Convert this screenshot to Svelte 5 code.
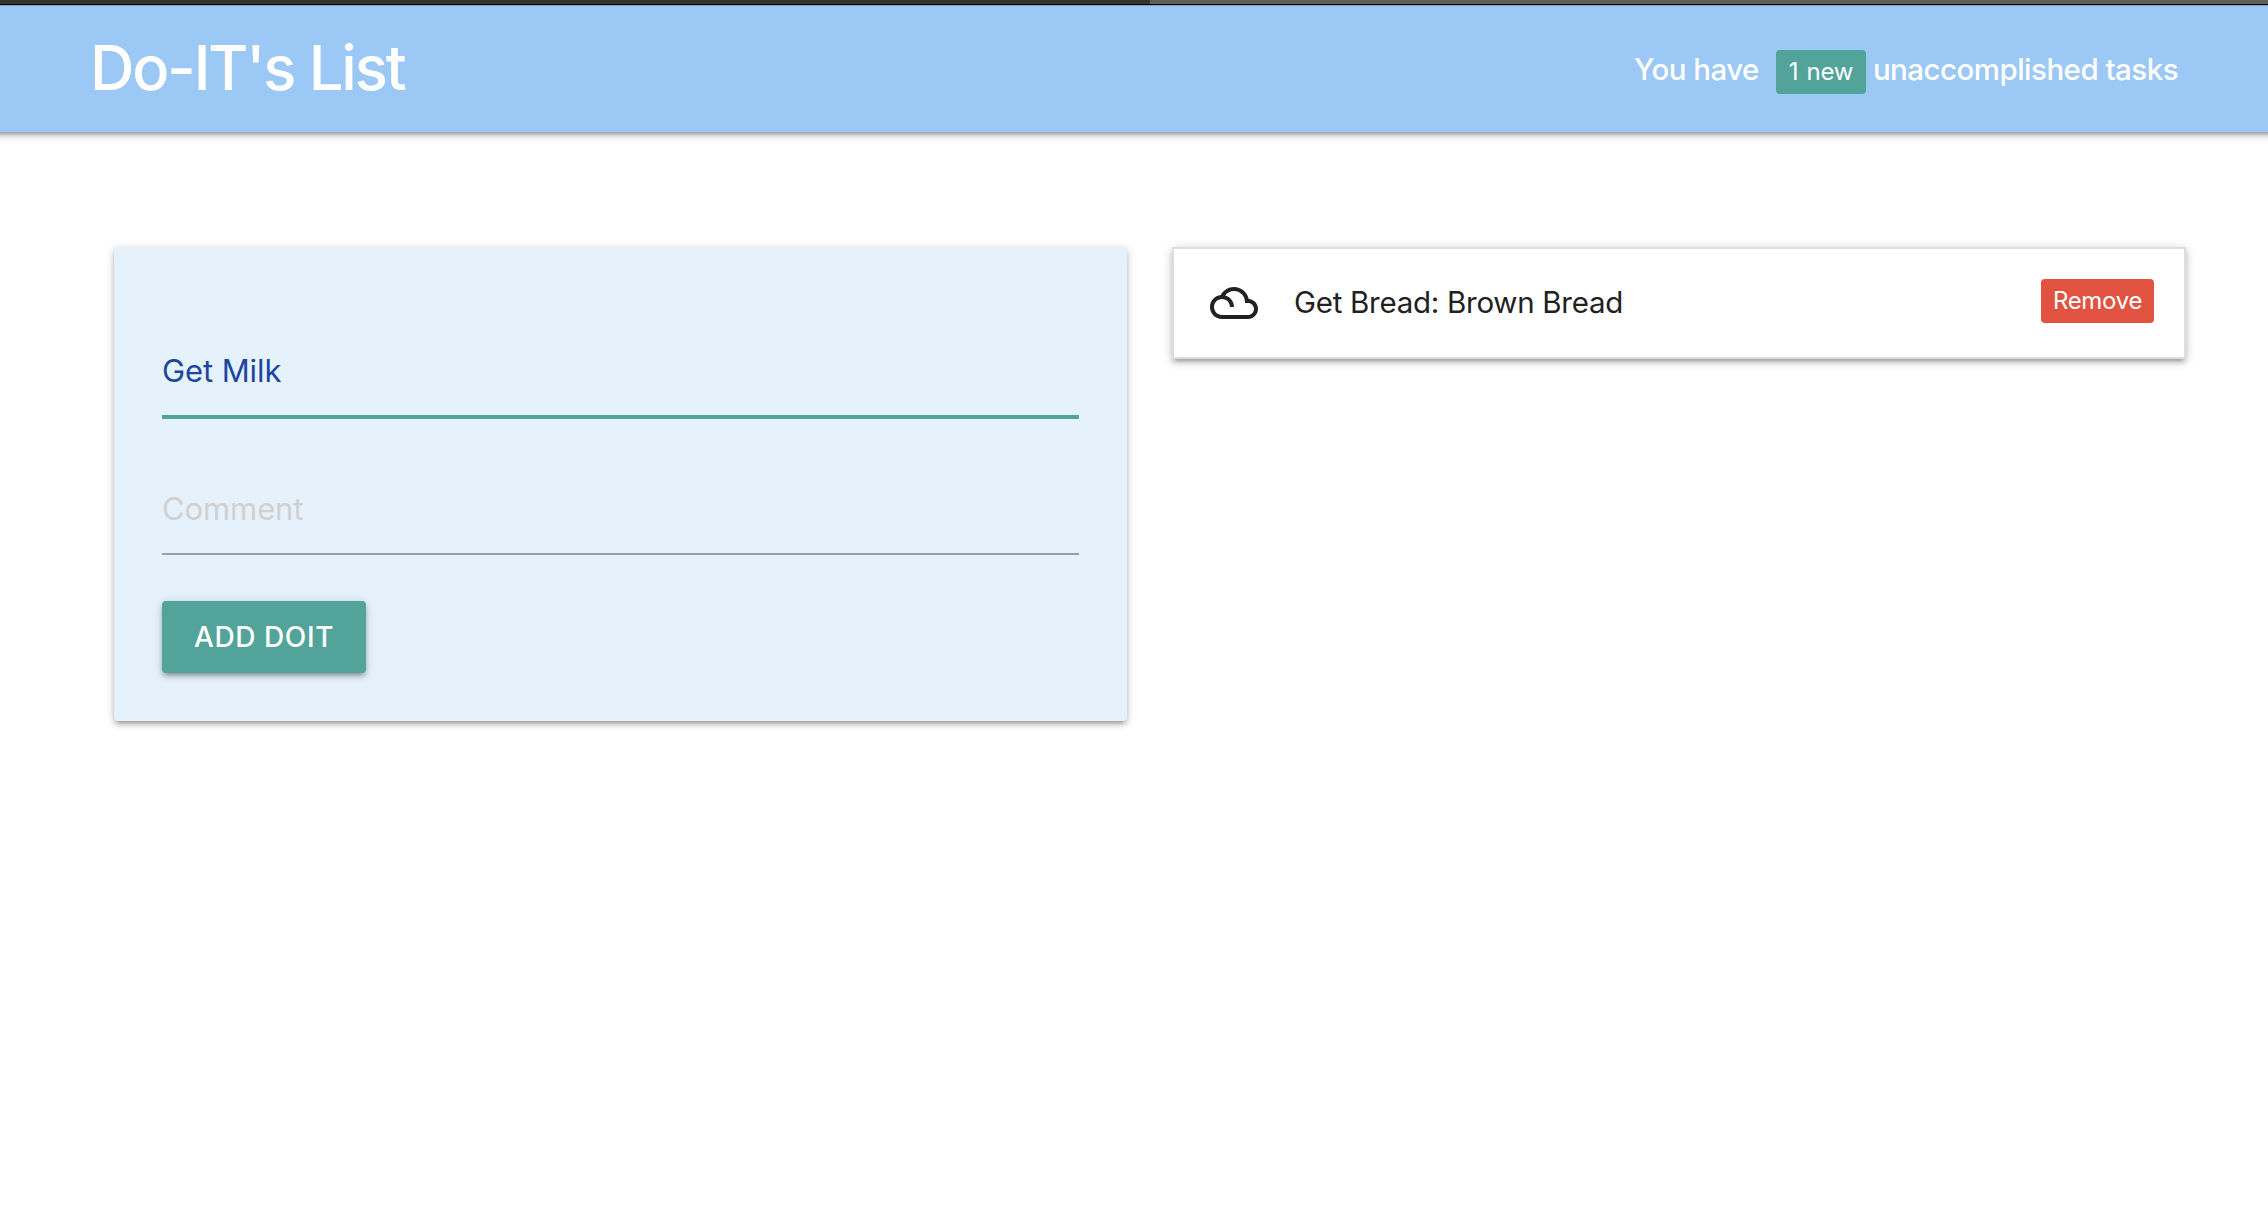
<script>
  let title = $state('Get Milk');
  let comment = $state('');
  let tasks = $state([{ id: 1, title: 'Get Bread', comment: 'Brown Bread' }]);

  function addTask(event) {
    event.preventDefault();
    if (!title) return;
    tasks.push({ id: Date.now(), title, comment });
    title = '';
    comment = '';
  }

  function removeTask(id) {
    tasks = tasks.filter((task) => task.id !== id);
  }
</script>

<div class="page">
  <div class="edge"><span class="edge-left"></span><span class="edge-right"></span></div>
  <nav>
    <span class="logo">Do-IT's List</span>
    <div class="status">
      <span class="have">You have</span>
      <span class="badge">{tasks.length} new</span>
      <span class="rest">unaccomplished tasks</span>
    </div>
  </nav>

  <main>
    <form class="card" onsubmit={addTask}>
      <input class="active" type="text" placeholder="Title" bind:value={title} />
      <input type="text" placeholder="Comment" bind:value={comment} />
      <button class="add" type="submit">ADD DOIT</button>
    </form>

    <ul class="list">
      {#each tasks as task (task.id)}
        <li>
          <svg class="cloud" viewBox="0 4 24 16" fill="#212121">
            <path d="M19.35 10.04C18.67 6.59 15.64 4 12 4 9.11 4 6.61 5.64 5.36 8.04 2.35 8.36 0 10.9 0 14c0 3.31 2.69 6 6 6h13c2.76 0 5-2.24 5-5 0-2.64-2.05-4.78-4.65-4.96zM19 18H6c-2.21 0-4-1.79-4-4s1.79-4 4-4 4 1.79 4 4h2c0-2.76-1.86-5.08-4.4-5.78C8.61 6.88 10.2 6 12 6c3.03 0 5.5 2.47 5.5 5.5v.5H19c1.65 0 3 1.35 3 3s-1.35 3-3 3z" />
          </svg>
          <span class="task">{task.title}: {task.comment}</span>
          <button class="remove" onclick={() => removeTask(task.id)}>Remove</button>
        </li>
      {/each}
    </ul>
  </main>
</div>

<style>
  :global(body) {
    background: #fff;
    font-family: Inter, 'Liberation Sans', sans-serif;
    font-weight: 430;
    color: #212121;
  }

  .page {
    min-height: 100vh;
    overflow: hidden;
  }

  .edge {
    display: flex;
    height: 4px;
    border-bottom: 1px solid #000;
  }
  .edge-left {
    width: 1150px;
    background: #333;
  }
  .edge-right {
    flex: 1;
    background: #5e5e5e;
  }

  /* Bleeds past both sides so the shadow stays even at the window edges */
  nav {
    box-sizing: border-box;
    height: 127px;
    margin: 0 -20px;
    padding: 0 110px 0 110px;
    display: flex;
    justify-content: space-between;
    align-items: center;
    border-top: 1px solid #7d9fc4;
    background: #9cc8f5;
    color: #fff;
    box-shadow:
      0 4px 4px 0 rgba(0, 0, 0, 0.14),
      0 6px 2px -4px rgba(0, 0, 0, 0.12),
      0 2px 10px 0 rgba(0, 0, 0, 0.2);
  }
  .logo {
    margin-top: -2px;
    font-size: 61.5px;
    font-weight: 450;
    line-height: 124px;
    letter-spacing: -2.1px;
  }
  .status {
    display: flex;
    align-items: baseline;
    margin-top: 2px;
    font-size: 29.5px;
    font-weight: 450;
    line-height: 44px;
    letter-spacing: -0.53px;
  }
  .badge {
    box-sizing: border-box;
    width: 90px;
    height: 44px;
    margin: 0 7px 0 17px;
    border-radius: 4px;
    background: #52a49a;
    font-size: 24px;
    font-weight: 430;
    letter-spacing: -0.3px;
    word-spacing: 2px;
    text-align: center;
  }

  main {
    display: grid;
    grid-template-columns: 1013px 1014px;
    column-gap: 45px;
    align-items: start;
    padding: 115px 0 0 114px;
  }

  .card {
    box-sizing: border-box;
    height: 474px;
    padding: 78px 48px 48px;
    display: flex;
    flex-direction: column;
    align-items: flex-start;
    border-radius: 4px;
    background: #e5f2fc;
    box-shadow:
      0 4px 4px 0 rgba(0, 0, 0, 0.14),
      0 6px 2px -4px rgba(0, 0, 0, 0.12),
      0 2px 10px 0 rgba(0, 0, 0, 0.2);
  }
  input {
    box-sizing: border-box;
    width: 100%;
    height: 92px;
    margin: 0 0 46px;
    padding: 0;
    border: 0;
    border-bottom: 2px solid #9e9e9e;
    outline: 0;
    background: transparent;
    font: 430 31px Inter, 'Liberation Sans', sans-serif;
    letter-spacing: -0.1px;
    color: #1e469f;
  }
  input.active {
    height: 94px;
    margin-bottom: 44px;
    border-bottom: 4px solid #52a49a;
  }
  input::placeholder {
    color: #d1d1d1;
    opacity: 1;
  }
  button {
    border: 0;
    padding: 0;
    border-radius: 4px;
    color: #fff;
    font-family: inherit;
    font-weight: inherit;
  }
  .add {
    width: 204px;
    height: 72px;
    background: #52a49a;
    font-size: 28px;
    font-weight: 450;
    letter-spacing: 0.6px;
    box-shadow:
      0 4px 4px 0 rgba(0, 0, 0, 0.14),
      0 6px 2px -4px rgba(0, 0, 0, 0.12),
      0 2px 10px 0 rgba(0, 0, 0, 0.2);
  }

  .list {
    margin: 0;
    padding: 0;
    list-style: none;
    border: 2px solid #ddd;
    box-shadow:
      0 4px 4px 0 rgba(0, 0, 0, 0.14),
      0 6px 2px -4px rgba(0, 0, 0, 0.12),
      0 2px 10px 0 rgba(0, 0, 0, 0.2);
  }
  li {
    box-sizing: border-box;
    height: 108px;
    padding: 0 30px 0 36px;
    display: flex;
    align-items: center;
  }
  .cloud {
    width: 48px;
    height: 32px;
    margin-right: 36px;
  }
  .task {
    flex: 1;
    margin-bottom: 2px;
    font-size: 29.5px;
    letter-spacing: -0.27px;
  }
  .remove {
    width: 113px;
    height: 44px;
    margin-bottom: 4px;
    padding-bottom: 2px;
    background: #e15241;
    font-size: 24px;
    letter-spacing: -0.3px;
  }
</style>
